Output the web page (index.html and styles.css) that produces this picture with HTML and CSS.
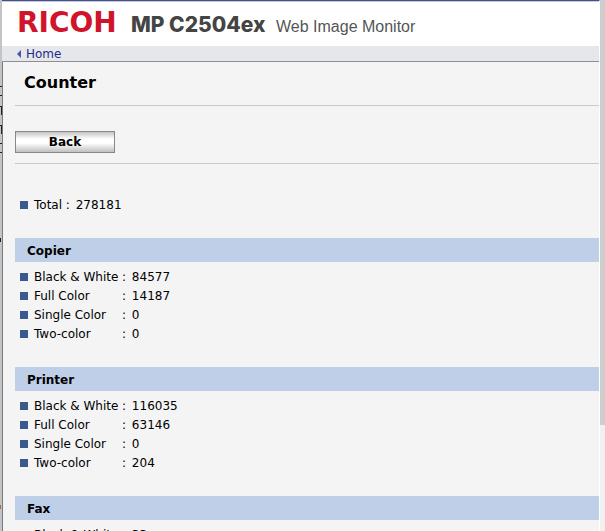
FILE: index.html
```html
<!DOCTYPE html>
<html lang="en">
<head>
<meta charset="utf-8">
<meta name="viewport" content="width=device-width, initial-scale=1">
<title>Web Image Monitor</title>
<link rel="stylesheet" href="styles.css">
</head>
<body>
<div class="edge">
<svg width="2" height="531" fill="#222">
<rect y="86" width="2" height="1"/>
<rect y="95" width="2" height="1"/>
<rect y="106" width="2" height="1"/>
<rect x="1" y="107" width="1" height="8"/>
<rect y="125" width="2" height="1"/>
<rect x="1" y="126" width="1" height="8"/>
<rect y="143" width="2" height="1"/>
<rect y="152" width="2" height="1"/>
<rect y="238" width="1" height="4"/>
<rect y="505" width="1" height="4" fill="#b06a3a"/>
</svg>
</div>

<div class="page">
<header>
<span class="logo">RICOH</span>
<span class="model">MP C2504ex</span>
<span class="product">Web Image Monitor</span>
</header>
<nav>
<a href="#"><svg width="4" height="8" fill="#4a55a5"><path d="M4 0v8L0 4z"/></svg>Home</a>
</nav>

<main>
<h1>Counter</h1>
<div class="buttons"><button type="button">Back</button></div>
<ul class="total">
<li>Total <span class="colon">:</span> 278181</li>
</ul>

<h2>Copier</h2>
<table>
<tr><th scope="row">Black &amp; White</th><td><span class="colon">:</span> 84577</td></tr>
<tr><th scope="row">Full Color</th><td><span class="colon">:</span> 14187</td></tr>
<tr><th scope="row">Single Color</th><td><span class="colon">:</span> 0</td></tr>
<tr><th scope="row">Two-color</th><td><span class="colon">:</span> 0</td></tr>
</table>

<h2>Printer</h2>
<table>
<tr><th scope="row">Black &amp; White</th><td><span class="colon">:</span> 116035</td></tr>
<tr><th scope="row">Full Color</th><td><span class="colon">:</span> 63146</td></tr>
<tr><th scope="row">Single Color</th><td><span class="colon">:</span> 0</td></tr>
<tr><th scope="row">Two-color</th><td><span class="colon">:</span> 204</td></tr>
</table>

<h2>Fax</h2>
<table>
<tr><th scope="row">Black &amp; White</th><td><span class="colon">:</span> 33</td></tr>
</table>
</main>
</div>

<div class="scrollbar"><div class="thumb"></div></div>
</body>
</html>
```

FILE: styles.css
```css
* {
  box-sizing: border-box;
}
body {
  margin: 0;
  height: 100vh;
  overflow: hidden;
  display: grid;
  grid-template-columns: 2px 1fr 5px;
  font-family: Verdana, "DejaVu Sans", sans-serif;
  font-size: 12px;
  color: #000;
  background: #f4f4f4;
}
.edge {
  background: #c4c4c4;
  overflow: hidden;
}
.edge svg {
  display: block;
}
.page {
  min-width: 0;
  height: 100vh;
  overflow: hidden;
  border-top: 1px solid #43508f;
  border-right: 1px solid #fff;
}
header {
  display: flex;
  align-items: baseline;
  height: 45px;
  padding: 3px 0 0 15px;
  line-height: 36px;
  background: #fff;
  border-top: 1px solid #c9cbdc;
  white-space: nowrap;
}
.logo {
  width: 114px;
  font-family: "DejaVu Sans", sans-serif;
  font-size: 28px;
  font-weight: bold;
  color: #cf142b;
}
.model {
  width: 145px;
  font-family: Inter, Arial, sans-serif;
  font-size: 21px;
  font-weight: 800;
  color: #444;
}
.product {
  font-family: Arial, "Liberation Sans", sans-serif;
  font-size: 16px;
  color: #555;
}
nav {
  height: 16px;
  padding-left: 15px;
  line-height: 16px;
  background: #e6e7ea;
  border-bottom: 1px solid #8f8f96;
}
nav a {
  display: flex;
  align-items: center;
  gap: 5px;
  color: #1f2d8a;
  text-decoration: none;
}
main {
  padding-left: 12px;
  border-left: 1px solid #777c82;
}
h1 {
  margin: 0;
  height: 44px;
  padding-left: 9px;
  border-bottom: 1px solid #c8c8c8;
  font-size: 16px;
  line-height: 42px;
}
.buttons {
  display: flex;
  padding: 25px 0 10px;
  border-bottom: 1px solid #c8c8c8;
}
button {
  width: 100px;
  height: 22px;
  padding: 0;
  border: 1px solid #888;
  background: linear-gradient(#c4c4c4, #fff 35%, #fff 55%, #c0c0c0);
  color: #000;
  font: bold 12px Verdana, "DejaVu Sans", sans-serif;
}
.total {
  list-style: none;
  margin: 0;
  padding: 32px 0 0 5px;
}
.total li, th, td {
  padding: 0;
  line-height: 19px;
  font-weight: normal;
  text-align: left;
  vertical-align: baseline;
  white-space: nowrap;
}
.total li::before, th::before {
  content: "";
  display: inline-block;
  width: 8px;
  height: 8px;
  margin-right: 6px;
  background: #3a5a8c;
}
.colon {
  margin-right: 2px;
}
h2 {
  margin: 23px 0 6px;
  padding: 2px 0 0 12px;
  background: #bfcfe7;
  font-size: 12px;
  line-height: 22px;
}
table {
  margin-left: 5px;
  border-collapse: collapse;
}
th {
  width: 102px;
}
.scrollbar {
  background: #f0f0f0;
}
.thumb {
  height: 80%;
  background: #cdcdcd;
}
```
